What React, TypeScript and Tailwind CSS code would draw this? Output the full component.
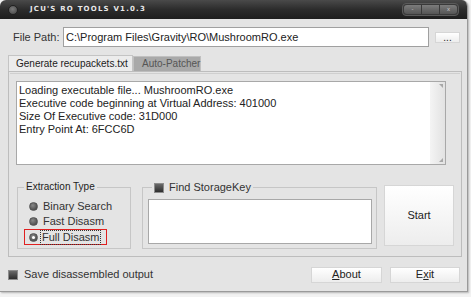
import React from 'react'

const ui = { fontFamily: '"Liberation Sans", Arial, sans-serif' }
const px = { fontFamily: '"Liberation Sans", Arial, sans-serif' }

const Radio = ({ checked }: { checked?: boolean }) => (
  <span className="relative shrink-0 inline-block w-[9px] h-[9px] rounded-full bg-[radial-gradient(circle_at_40%_35%,#8a8a8a,#3a3a3a)] border border-[#555]">
    {checked && <span className="absolute left-[2px] top-[2px] w-[3px] h-[3px] rounded-full bg-white" />}
  </span>
)

const Check = () => (
  <span className="shrink-0 inline-block w-[10px] h-[10px] bg-linear-to-b from-[#6a6a6a] to-[#2e2e2e] border border-[#8c8c8c]" />
)

const Btn = ({ children, className }: { children: React.ReactNode; className: string }) => (
  <div
    style={px}
    className={`shrink-0 flex items-center justify-center whitespace-nowrap bg-linear-to-b from-white to-[#ededed] border border-[#d6d6d6] text-[10px] text-[#222] ${className}`}
  >
    {children}
  </div>
)

export default function App() {
  return (
    <div className="w-[471px] h-[297px] bg-[#f2f2f2] overflow-hidden whitespace-nowrap" style={ui}>
      <div className="w-[468px] h-[292px] flex flex-col rounded-t-[6px] overflow-hidden border-r border-b border-[#9a9a9a] shadow-[1px_1px_2px_rgba(0,0,0,0.25)]">
        {/* Title bar */}
        <div className="shrink-0 h-[19px] flex items-center bg-linear-to-b from-[#4a4a4a] via-[#2c2c2c] to-[#1e1e1e] px-[8px]">
          <span className="w-[10px] h-[10px] rounded-full bg-[radial-gradient(circle_at_45%_40%,#7a7a7a,#444)] border border-[#222]" />
          <span className="ml-[12px] text-[7px] font-bold tracking-[1.2px] text-[#e8e8e8]" style={{ fontFamily: '"DejaVu Sans", sans-serif' }}>
            JCU'S RO TOOLS V1.0.3
          </span>
          <div className="ml-auto flex gap-px p-[1px] rounded-[4px] bg-[#3a3a3a] border border-[#5a5a5a]">
            <span className="w-[17px] h-[9px] rounded-l-[3px] bg-linear-to-b from-[#7c7c7c] to-[#555] text-[6px] leading-[9px] text-center text-[#ccc]">-</span>
            <span className="w-[17px] h-[9px] bg-linear-to-b from-[#7c7c7c] to-[#555]" />
            <span className="w-[17px] h-[9px] rounded-r-[3px] bg-linear-to-b from-[#7c7c7c] to-[#555] text-[6px] leading-[9px] text-center text-[#ccc]">x</span>
          </div>
        </div>

        {/* Body */}
        <div className="flex-1 bg-[#e4e4e4] flex flex-col">
          <div className="shrink-0 flex items-start mt-[8px]">
            <span className="ml-[13px] mt-[4px] text-[11px] leading-[13px] text-[#333] w-[50px]">File Path:</span>
            <div className="w-[366px] h-[20px] bg-white border border-[#a0a0a0] text-[11px] text-[#222] pl-[2px] leading-[18px]">
              C:\Program Files\Gravity\RO\MushroomRO.exe
            </div>
            <Btn className="ml-[6px] mt-[5px] w-[25px] h-[11px] leading-[6px] text-[9px]">...</Btn>
          </div>

          {/* Tabs */}
          <div className="shrink-0 flex items-end ml-[8px] mt-[8px] h-[16px]" style={px}>
            <div className="w-[125px] h-[16px] border border-b-0 border-[#c4c4c4] bg-[#ececec] text-[10px] text-[#222] pl-[7px] leading-[15px]">
              Generate recupackets.txt
            </div>
            <div className="w-[68px] h-[15px] border border-b-0 border-[#c0c0c0] bg-[#a9a9a9] text-[10px] text-[#555] pl-[8px] leading-[14px]">
              Auto-Patcher
            </div>
          </div>

          {/* Panel */}
          <div className="shrink-0 ml-[8px] w-[454px] h-[186px] border border-[#bdbdbd] flex flex-col">
            <div className="mx-[1px] mt-[1px] h-px bg-[#cfcfcf]" />
            <div className="ml-[7px] mt-[7px] w-[430px] h-[84px] bg-white border border-[#a8a8a8] flex">
              <div className="flex-1 pl-[2px] pt-[2px] text-[11px] leading-[13px] text-[#222]">
                <div>Loading executable file... MushroomRO.exe</div>
                <div>Executive code beginning at Virtual Address: 401000</div>
                <div>Size Of Executive code: 31D000</div>
                <div>Entry Point At: 6FCC6D</div>
              </div>
              <div className="w-[15px] bg-linear-to-r from-[#f4f4f4] to-[#e2e2e2] flex flex-col justify-between items-end p-[2px]">
                <span className="w-0 h-0 border-l-[4px] border-l-transparent border-t-[4px] border-t-[#a8a8a8]" />
                <span className="w-0 h-0 border-l-[4px] border-l-transparent border-b-[4px] border-b-[#a8a8a8]" />
              </div>
            </div>

            <div className="flex mt-[20px]">
              {/* Extraction Type */}
              <div className="shrink-0 ml-[8px] mt-[2px] w-[114px] h-[62px] border border-[#c6c6c6] flex flex-col">
                <span className="-mt-[7px] ml-[6px] px-[2px] self-start bg-[#e4e4e4] text-[10px] leading-[12px] text-[#222]" style={px}>
                  Extraction Type
                </span>
                <div className="mt-[6px] ml-[6px] flex flex-col text-[11px] text-[#333]">
                  <div className="flex items-center gap-[5px] h-[15px] border border-transparent pl-[4px] w-[83px]">
                    <Radio /> Binary Search
                  </div>
                  <div className="flex items-center gap-[5px] h-[15px] border border-transparent pl-[4px] w-[83px]">
                    <Radio /> Fast Disasm
                  </div>
                  <div className="flex items-center gap-[3px] h-[16px] border border-[#e02020] pl-[4px] w-[83px]">
                    <Radio checked />
                    <span className="outline outline-1 outline-dotted outline-[#333] leading-[13px] px-px">Full Disasm</span>
                  </div>
                </div>
              </div>

              {/* Find StorageKey */}
              <div className="shrink-0 ml-[11px] mt-[2px] w-[235px] h-[62px] border border-[#c6c6c6] flex flex-col">
                <div className="-mt-[7px] ml-[9px] px-[2px] self-start bg-[#e4e4e4] flex items-center gap-[5px] text-[11px] leading-[13px] text-[#333]">
                  <Check /> Find StorageKey
                </div>
                <div className="ml-[5px] mt-[5px] w-[224px] h-[45px] bg-white border border-[#a8a8a8]" />
              </div>

              <Btn className="ml-[7px] w-[70px] h-[61px] text-[11px]">Start</Btn>
            </div>
          </div>

          {/* Bottom row */}
          <div className="shrink-0 flex items-center mt-[9px] h-[17px]">
            <div className="ml-[8px] flex items-center gap-[6px] text-[11px] text-[#333]">
              <Check /> Save disassembled output
            </div>
            <Btn className="ml-auto w-[71px] h-[16px] text-[11px]">
              <span><span className="underline">A</span>bout</span>
            </Btn>
            <Btn className="ml-[8px] mr-[7px] w-[70px] h-[16px] text-[11px]">
              <span>E<span className="underline">x</span>it</span>
            </Btn>
          </div>
        </div>
      </div>
    </div>
  )
}
